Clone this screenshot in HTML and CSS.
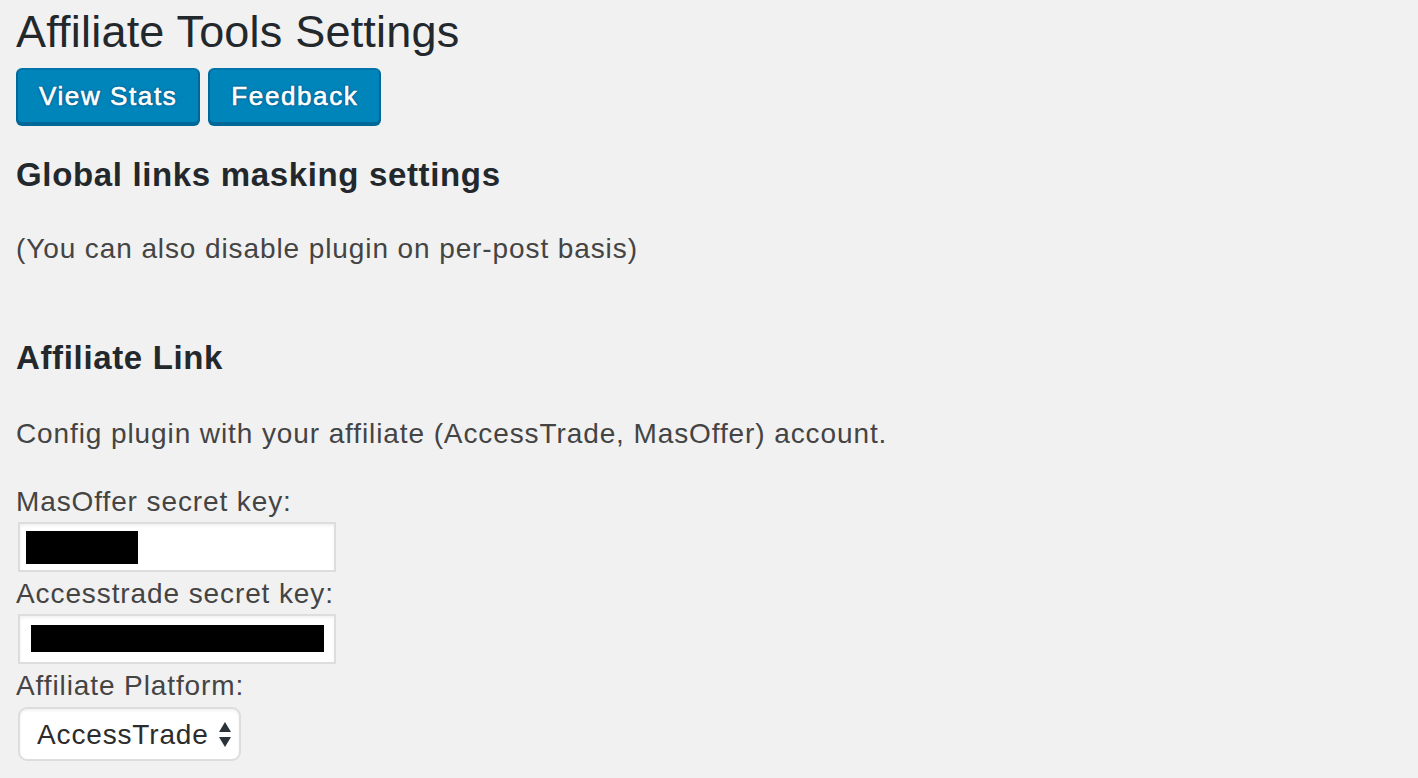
FILE: index.html
```html
<!DOCTYPE html>
<html lang="en">
<head>
<meta charset="utf-8">
<title>Affiliate Tools Settings</title>
<link rel="stylesheet" href="styles.css">
</head>
<body>
<div class="wrap">
  <h1 class="page-title">Affiliate Tools Settings</h1>
  <div class="actions">
    <a class="button" href="#">View Stats</a>
    <a class="button" href="#">Feedback</a>
  </div>

  <h2 class="section-title first">Global links masking settings</h2>
  <p class="text note">(You can also disable plugin on per-post basis)</p>

  <h2 class="section-title second">Affiliate Link</h2>
  <p class="text intro">Config plugin with your affiliate (AccessTrade, MasOffer) account.</p>

  <form class="settings">
    <label class="text label label-first">MasOffer secret key:</label>
    <div class="field"><span class="redact redact-short"></span></div>

    <label class="text label">Accesstrade secret key:</label>
    <div class="field"><span class="redact redact-long"></span></div>

    <label class="text label">Affiliate Platform:</label>
    <div class="select-wrap">
      <select class="select">
        <option>AccessTrade</option>
        <option>MasOffer</option>
      </select>
      <svg class="select-arrows" width="14" height="26" viewBox="0 0 14 26" aria-hidden="true">
        <path d="M7 0 L13 10 L1 10 Z" fill="#2c3338"/>
        <path d="M1 15 L13 15 L7 25 Z" fill="#2c3338"/>
      </svg>
    </div>
  </form>
</div>
</body>
</html>
```

FILE: styles.css
```css
html, body {
  margin: 0;
  padding: 0;
  background: #f1f1f1;
}

body {
  font-family: "Liberation Sans", Arial, sans-serif;
  color: #444;
}

.wrap {
  padding: 4px 0 0 16px;
}

.page-title {
  margin: 0;
  font-size: 45px;
  line-height: 56px;
  font-weight: 400;
  letter-spacing: 0.2px;
  color: #23282d;
}

.actions {
  display: flex;
  gap: 8px;
  margin-top: 8px;
}

.button {
  display: block;
  box-sizing: border-box;
  height: 56px;
  padding: 0 21px 2px;
  font-size: 26px;
  line-height: 52px;
  letter-spacing: 1.6px;
  color: #fff;
  text-decoration: none;
  background: #0085ba;
  border: 2px solid;
  border-color: #0073aa #006799 #006799;
  border-radius: 6px;
  box-shadow: 0 2px 0 #006799;
  -webkit-text-stroke: 0.6px #fff;
  text-shadow: 0 -1px 2px #006799, 1px 0 2px #006799, 0 1px 2px #006799, -1px 0 2px #006799;
}

.section-title {
  margin: 0;
  font-size: 33px;
  line-height: 40px;
  font-weight: 700;
  letter-spacing: 0.65px;
  color: #23282d;
}

.section-title.first {
  margin-top: 31px;
}

.section-title.second {
  margin-top: 71px;
}

.text {
  margin: 0;
  font-size: 28px;
  line-height: 36px;
  letter-spacing: 0.9px;
  color: #444;
}

.note {
  margin-top: 36px;
}

.intro {
  margin-top: 38px;
}

.settings {
  display: flex;
  flex-direction: column;
  align-items: flex-start;
  margin: 0;
}

.label {
  display: block;
  margin-top: 4px;
}

.label-first {
  margin-top: 32px;
}

.field {
  display: flex;
  align-items: flex-start;
  box-sizing: border-box;
  width: 318px;
  height: 50px;
  margin: 2px 0 0 2px;
  background: #fff;
  border: 2px solid #dddddd;
  box-shadow: inset 0 2px 3px rgba(0, 0, 0, 0.06);
}

.redact {
  display: block;
  background: #000;
}

.redact-short {
  width: 112px;
  height: 33px;
  margin: 7px 0 0 6px;
}

.redact-long {
  width: 293px;
  height: 27px;
  margin: 9px 0 0 11px;
}

.select-wrap {
  position: relative;
  margin: 3px 0 0 2px;
}

.select {
  display: block;
  box-sizing: border-box;
  width: 223px;
  height: 54px;
  margin: 0;
  padding: 0 0 0 17px;
  -webkit-appearance: none;
  appearance: none;
  background: #fff;
  border: 2px solid #dddddd;
  border-radius: 9px;
  box-shadow: inset 0 2px 3px rgba(0, 0, 0, 0.05);
  font-family: "Liberation Sans", Arial, sans-serif;
  font-size: 28px;
  letter-spacing: 0.85px;
  color: #2c2c2c;
  outline: none;
}

.select-arrows {
  position: absolute;
  left: 200px;
  top: 15px;
  pointer-events: none;
}
```
